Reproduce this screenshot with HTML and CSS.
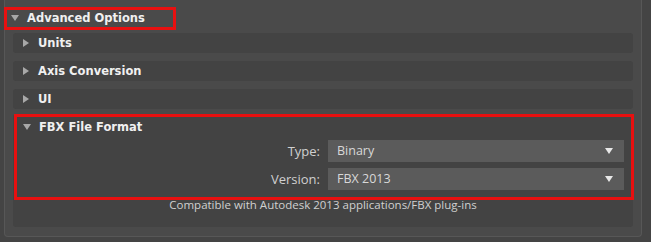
FILE: index.html
```html
<!DOCTYPE html>
<html>
<head>
    <title>FBX Export</title>
    <link rel="stylesheet" href="styles.css">
</head>
<body>
    <div class="rollout">
        <div class="rollout-head marked">
            <span class="arrow open"></span>
            <span class="title">Advanced Options</span>
        </div>

        <div class="sub">
            <div class="sub-head"><span class="arrow closed"></span><span class="title">Units</span></div>
        </div>
        <div class="sub">
            <div class="sub-head"><span class="arrow closed"></span><span class="title">Axis Conversion</span></div>
        </div>
        <div class="sub">
            <div class="sub-head"><span class="arrow closed"></span><span class="title">UI</span></div>
        </div>

        <div class="sub sub-open">
            <div class="marked-box">
                <div class="sub-head"><span class="arrow open"></span><span class="title">FBX File Format</span></div>
                <div class="field">
                    <label class="field-label">Type:</label>
                    <div class="dropdown">Binary<span class="caret"></span></div>
                </div>
                <div class="field">
                    <label class="field-label">Version:</label>
                    <div class="dropdown">FBX 2013<span class="caret"></span></div>
                </div>
            </div>
            <div class="note">Compatible with Autodesk 2013 applications/FBX plug-ins</div>
        </div>
    </div>
</body>
</html>
```

FILE: styles.css
```css
body {
    margin: 0;
    background-color: #444444;
    font-family: "DejaVu Sans", sans-serif;
    width: 651px;
    height: 242px;
    overflow: hidden;
}

.rollout {
    margin: 0 9px 0 4px;
    padding: 6px 8px 9px 0;
    background-color: #4a4a4a;
    border: 1px solid #575757;
    border-top: none;
    border-radius: 0 0 4px 4px;
    height: 221px;
}

.rollout-head {
    display: inline-flex;
    align-items: center;
    height: 17px;
    padding: 0 28px 0 4px;
    margin-left: -1px;
    margin-bottom: 3px;
}

.marked {
    border: 3px solid #e81010;
}

.arrow {
    display: inline-block;
    width: 0;
    height: 0;
    margin-right: 8px;
}

.arrow.open {
    border-left: 4px solid transparent;
    border-right: 4px solid transparent;
    border-top: 6px solid #a8a8a8;
}

.arrow.closed {
    border-top: 4px solid transparent;
    border-bottom: 4px solid transparent;
    border-left: 6px solid #a8a8a8;
    margin-left: 1px;
    margin-right: 9px;
}

.title {
    color: #f0f0f0;
    font-weight: bold;
    font-size: 11.5px;
}

.sub {
    margin: 0 0 8px 8px;
    background-color: #434343;
    border-radius: 3px;
}

.sub-head {
    display: flex;
    align-items: center;
    height: 20px;
    padding-left: 9px;
}

.sub-open {
    height: 113px;
    margin-top: -3px;
    margin-bottom: 0;
}

.marked-box {
    border: 3px solid #e81010;
    margin: 0 -1px 0 1px;
    padding: 0 7px 7px 0;
}

.marked-box .sub-head {
    padding-left: 6px;
}

.field {
    display: flex;
    align-items: center;
    margin-top: 3px;
}

.field + .field {
    margin-top: 6px;
}

.field-label {
    width: 303px;
    text-align: right;
    padding-right: 8px;
    color: #d0d0d0;
    font-family: "Open Sans", sans-serif;
    font-size: 13px;
}

.dropdown {
    flex: 1;
    position: relative;
    height: 22px;
    line-height: 22px;
    padding-left: 9px;
    background-color: #5b5b5b;
    color: #d8d8d8;
    font-family: "Open Sans", sans-serif;
    font-size: 12.5px;
}

.caret {
    position: absolute;
    right: 11px;
    top: 8px;
    border-left: 4px solid transparent;
    border-right: 4px solid transparent;
    border-top: 6px solid #e8e8e8;
}

.note {
    text-align: center;
    color: #d0d0d0;
    font-family: "Open Sans", sans-serif;
    font-size: 11.5px;
    line-height: 12px;
    margin-top: -1px;
}
```
